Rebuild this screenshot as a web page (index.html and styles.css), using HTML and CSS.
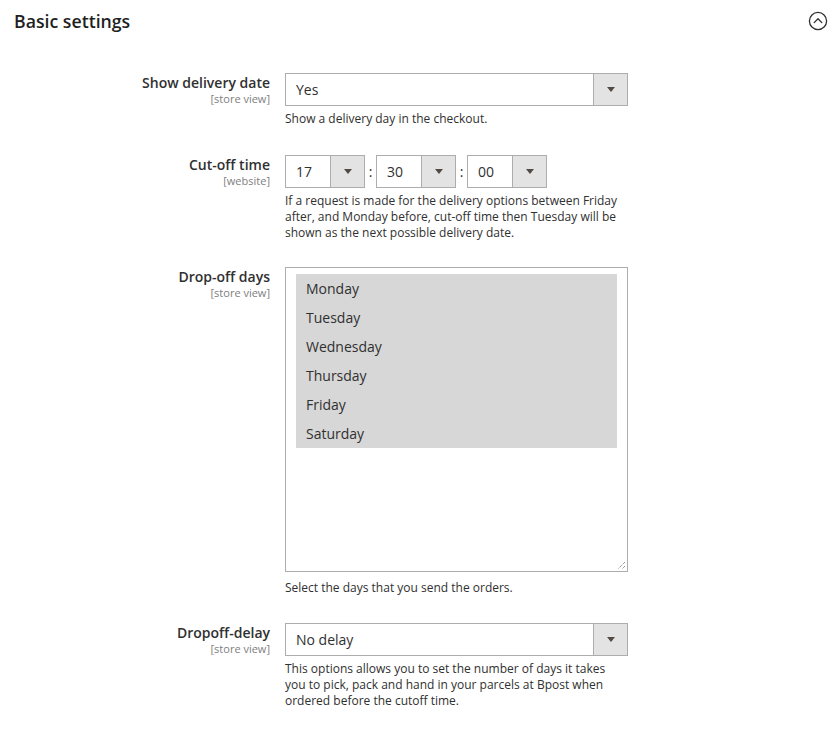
FILE: index.html
```html
<!DOCTYPE html>
<html lang="en">
<head>
<meta charset="utf-8">
<title>Basic settings</title>
<link rel="stylesheet" href="styles.css">
</head>
<body>
<div class="section">
  <div class="section-head">
    <h2 class="section-title">Basic settings</h2>
    <span class="collapse-icon">
      <svg width="20" height="20" viewBox="0 0 20 20"><circle cx="10" cy="10" r="8.6" fill="none" stroke="#303030" stroke-width="1.3"/><polyline points="6.2,11.6 10,7.8 13.8,11.6" fill="none" stroke="#303030" stroke-width="1.3" stroke-linecap="round" stroke-linejoin="round"/></svg>
    </span>
  </div>

  <div class="form">
    <div class="row">
      <div class="label"><span class="label-text">Show delivery date</span><span class="scope">[store view]</span></div>
      <div class="field">
        <div class="select wide"><span class="value">Yes</span><span class="arrow"></span></div>
        <p class="note">Show a delivery day in the checkout.</p>
      </div>
    </div>

    <div class="row">
      <div class="label"><span class="label-text">Cut-off time</span><span class="scope">[website]</span></div>
      <div class="field">
        <div class="time">
          <div class="select small"><span class="value">17</span><span class="arrow"></span></div>
          <span class="sep">:</span>
          <div class="select small"><span class="value">30</span><span class="arrow"></span></div>
          <span class="sep">:</span>
          <div class="select small"><span class="value">00</span><span class="arrow"></span></div>
        </div>
        <p class="note">If a request is made for the delivery options between Friday after, and Monday before, cut-off time then Tuesday will be shown as the next possible delivery date.</p>
      </div>
    </div>

    <div class="row row-multi">
      <div class="label"><span class="label-text">Drop-off days</span><span class="scope">[store view]</span></div>
      <div class="field">
        <div class="multi">
          <div class="opt">Monday</div>
          <div class="opt">Tuesday</div>
          <div class="opt">Wednesday</div>
          <div class="opt">Thursday</div>
          <div class="opt">Friday</div>
          <div class="opt">Saturday</div>
          <svg class="grip" width="9" height="9" viewBox="0 0 9 9"><line x1="8" y1="1" x2="1" y2="8" stroke="#6a6a6a" stroke-width="1" stroke-dasharray="1 1"/><line x1="8" y1="5" x2="5" y2="8" stroke="#6a6a6a" stroke-width="1" stroke-dasharray="1 1"/></svg>
        </div>
        <p class="note note-multi">Select the days that you send the orders.</p>
      </div>
    </div>

    <div class="row">
      <div class="label"><span class="label-text">Dropoff-delay</span><span class="scope">[store view]</span></div>
      <div class="field">
        <div class="select wide"><span class="value">No delay</span><span class="arrow"></span></div>
        <p class="note">This options allows you to set the number of days it takes you to pick, pack and hand in your parcels at Bpost when ordered before the cutoff time.</p>
      </div>
    </div>
  </div>
</div>
</body>
</html>
```

FILE: styles.css
```css
html, body {
  margin: 0;
  padding: 0;
  background: #ffffff;
}

body {
  font-family: "Open Sans", "Noto Sans", "Liberation Sans", sans-serif;
  color: #303030;
}

.section {
  padding: 0 8px 0 14px;
}

.section-head {
  display: flex;
  align-items: center;
  justify-content: space-between;
  padding-top: 10px;
}

.section-title {
  margin: 0;
  font-size: 17.7px;
  font-weight: 600;
  line-height: 22px;
  color: #1f1f1f;
}

.collapse-icon {
  display: flex;
  width: 20px;
  height: 20px;
}

.form {
  margin-top: 41px;
  display: flex;
  flex-direction: column;
  gap: 28px;
}

.row {
  display: grid;
  grid-template-columns: 256px 343px;
  column-gap: 15px;
}

.row-multi {
  margin-top: -2px;
  margin-bottom: -1px;
}

.label {
  display: flex;
  flex-direction: column;
  align-items: flex-end;
  text-align: right;
  padding-top: 1px;
}

.label-text {
  font-size: 14px;
  font-weight: 600;
  line-height: 18px;
  color: #303030;
}

.scope {
  font-size: 11px;
  line-height: 13px;
  color: #808080;
}

.field {
  display: flex;
  flex-direction: column;
}

.select {
  display: flex;
  align-items: stretch;
  height: 33px;
  box-sizing: border-box;
  border: 1px solid #adadad;
  background: #ffffff;
}

.select.wide {
  width: 343px;
}

.select.small {
  width: 80px;
}

.value {
  flex: 1;
  padding-left: 10px;
  font-size: 14px;
  line-height: 31px;
  color: #303030;
}

.arrow {
  width: 33px;
  border-left: 1px solid #adadad;
  background: #e3e3e3;
  display: flex;
  align-items: center;
  justify-content: center;
}

.arrow::after {
  content: "";
  width: 0;
  height: 0;
  border-left: 4px solid transparent;
  border-right: 4px solid transparent;
  border-top: 5px solid #514943;
}

.time {
  display: flex;
  align-items: center;
}

.sep {
  width: 11px;
  text-align: center;
  font-size: 14px;
  color: #303030;
}

.note {
  margin: 5px 0 0;
  font-size: 12px;
  line-height: 16px;
  color: #303030;
}

.note-multi {
  margin-top: 8px;
}

.multi {
  position: relative;
  width: 343px;
  height: 305px;
  box-sizing: border-box;
  border: 1px solid #adadad;
  padding: 6px 10px;
}

.opt {
  height: 29px;
  line-height: 29px;
  padding-left: 10px;
  background: #d7d7d7;
  font-size: 14px;
  color: #303030;
}

.grip {
  position: absolute;
  right: 1px;
  bottom: 1px;
}
```
